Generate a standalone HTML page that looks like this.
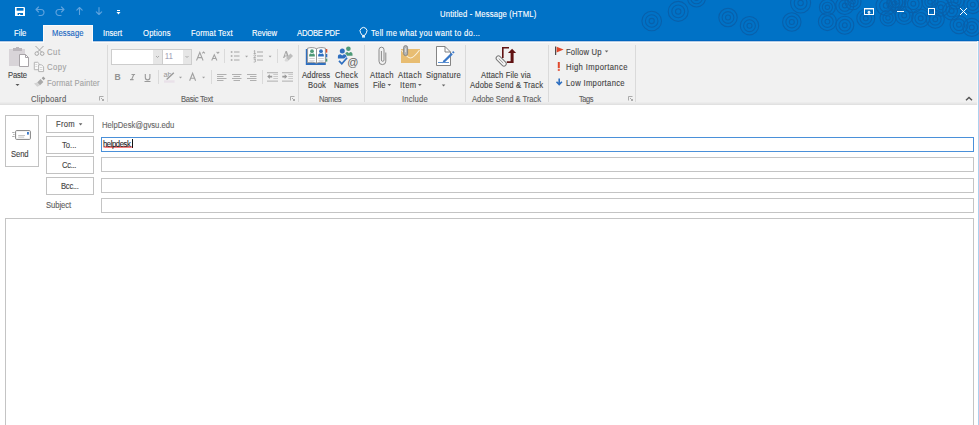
<!DOCTYPE html>
<html><head><meta charset="utf-8">
<style>
*{box-sizing:border-box}
html,body{margin:0;padding:0;width:979px;height:425px;overflow:hidden;background:#fff;font-family:"Liberation Sans",sans-serif}
.a{position:absolute}
.t{position:absolute;white-space:pre;font-size:8.5px;line-height:10px;letter-spacing:-0.2px;color:#444;-webkit-text-stroke:0.12px currentColor}
.sep{position:absolute;width:1px;background:#dadada}
.btn{position:absolute;border:1px solid #c2c2c2;background:#fff}
.inp{position:absolute;border:1px solid #c4c4c4;background:#fff;left:101px;width:873px}
svg{position:absolute;left:0;top:0}
</style></head><body>
<div class="a" style="left:0;top:0;width:979px;height:41px;background:#0072c6"></div>
<div class="a" style="left:0;top:40px;width:979px;height:1px;background:#0066bf"></div>
<div class="a" style="left:0;top:41px;width:978px;height:1px;background:#b4cce6"></div>
<div class="a" style="left:0;top:42px;width:978px;height:1px;background:#fbfbfb"></div>
<div class="a" style="left:0;top:43px;width:978px;height:59px;background:#f1f1f1"></div>
<div class="a" style="left:0;top:102px;width:978px;height:1px;background:#ececec"></div>
<div class="a" style="left:0;top:103px;width:978px;height:1px;background:#e7e7e7"></div>
<div class="a" style="left:0;top:104px;width:978px;height:1px;background:#e1e1e1"></div>
<div class="a" style="left:977px;top:41px;width:1px;height:64px;background:#fafafa"></div>
<div class="a" style="left:978px;top:41px;width:1px;height:384px;background:#add0ef"></div>
<svg width="979" height="41" style="z-index:0"><g fill="none" stroke="#0860ab" stroke-width="1.1"><g transform="translate(651.7 21.0)"><circle r="9.8"/><circle r="6.3"/><circle r="2.6"/></g><g transform="translate(678.2 11.4)"><circle r="10.0"/><circle r="6.4"/><circle r="2.7"/></g><g transform="translate(696.5 -2.0)"><circle r="9.0"/><circle r="5.8"/><circle r="2.4"/></g><g transform="translate(728.0 17.5)"><circle r="9.2"/><circle r="5.9"/><circle r="2.5"/></g><g transform="translate(749.5 25.7)"><circle r="9.2"/><circle r="5.9"/><circle r="2.5"/></g><g transform="translate(791.8 22.0)"><circle r="9.2"/><circle r="5.9"/><circle r="2.5"/></g><g transform="translate(800.6 3.0)"><circle r="10.0"/><circle r="6.4"/><circle r="2.7"/></g><g transform="translate(827.4 21.6)"><circle r="9.0"/><circle r="5.8"/><circle r="2.4"/></g><g transform="translate(827.4 7.3)"><circle r="8.0"/><circle r="5.1"/><circle r="2.2"/></g><g transform="translate(844.8 25.2)"><circle r="9.0"/><circle r="5.8"/><circle r="2.4"/></g><g transform="translate(844.8 5.5)"><circle r="9.0"/><circle r="5.8"/><circle r="2.4"/></g><g transform="translate(853.0 1.8)"><circle r="8.0"/><circle r="5.1"/><circle r="2.2"/></g><g transform="translate(865.8 18.3)"><circle r="9.0"/><circle r="5.8"/><circle r="2.4"/></g><g transform="translate(886.0 5.5)"><circle r="10.0"/><circle r="6.4"/><circle r="2.7"/></g><g transform="translate(896.9 1.8)"><circle r="9.0"/><circle r="5.8"/><circle r="2.4"/></g><g transform="translate(904.2 15.5)"><circle r="9.0"/><circle r="5.8"/><circle r="2.4"/></g><g transform="translate(913.3 3.7)"><circle r="9.0"/><circle r="5.8"/><circle r="2.4"/></g><g transform="translate(920.7 18.3)"><circle r="9.0"/><circle r="5.8"/><circle r="2.4"/></g><g transform="translate(935.3 19.2)"><circle r="9.0"/><circle r="5.8"/><circle r="2.4"/></g><g transform="translate(940.8 7.3)"><circle r="9.0"/><circle r="5.8"/><circle r="2.4"/></g><g transform="translate(951.7 11.0)"><circle r="9.0"/><circle r="5.8"/><circle r="2.4"/></g><g transform="translate(959.0 24.7)"><circle r="9.0"/><circle r="5.8"/><circle r="2.4"/></g><g transform="translate(971.8 27.4)"><circle r="9.0"/><circle r="5.8"/><circle r="2.4"/></g><g transform="translate(972.8 4.6)"><circle r="9.0"/><circle r="5.8"/><circle r="2.4"/></g><g transform="translate(894.7 2.9)"><circle r="8.0"/><circle r="5.1"/><circle r="2.2"/></g><g transform="translate(955.9 1.0)"><circle r="8.0"/><circle r="5.1"/><circle r="2.2"/></g><g transform="translate(930.0 2.0)"><circle r="8.0"/><circle r="5.1"/><circle r="2.2"/></g><g transform="translate(888.0 18.0)"><circle r="8.0"/><circle r="5.1"/><circle r="2.2"/></g></g></svg>
<div class="a" style="left:43px;top:25px;width:50px;height:18px;background:#fbfbfb"></div>
<div class="a" style="left:44px;top:26px;width:48px;height:17px;background:#f1f1f1"></div>
<div class="sep" style="left:107px;top:45px;height:57px"></div>
<div class="sep" style="left:298px;top:45px;height:57px"></div>
<div class="sep" style="left:364px;top:45px;height:57px"></div>
<div class="sep" style="left:465px;top:45px;height:57px"></div>
<div class="sep" style="left:548px;top:45px;height:57px"></div>
<div class="sep" style="left:635px;top:45px;height:57px"></div>
<div class="sep" style="left:158px;top:70px;height:14px"></div>
<div class="sep" style="left:211px;top:70px;height:14px"></div>
<div class="sep" style="left:262px;top:70px;height:14px"></div>
<div class="sep" style="left:224px;top:49px;height:14px"></div>
<div class="sep" style="left:277px;top:49px;height:14px"></div>
<div class="btn" style="left:5px;top:115px;width:34px;height:52px"></div>
<div class="btn" style="left:46px;top:115px;width:48px;height:18px"></div>
<div class="btn" style="left:46px;top:136px;width:48px;height:18px"></div>
<div class="btn" style="left:46px;top:156px;width:48px;height:18px"></div>
<div class="btn" style="left:46px;top:177px;width:48px;height:18px"></div>
<div class="inp" style="top:137px;height:15px;border-color:#4a90d9"></div>
<div class="inp" style="top:157px;height:15px"></div>
<div class="inp" style="top:178px;height:15px"></div>
<div class="inp" style="top:198px;height:15px"></div>
<div class="a" style="left:5px;top:218px;width:969px;height:220px;border:1px solid #c4c4c4"></div>
<svg width="979" height="425">
<!-- quick access -->
<path fill="#fff" d="M15 7h9.3l0.7 0.7v8.3h-10z"/>
<rect fill="#0072c6" x="16.6" y="8" width="6.9" height="2.7"/>
<rect fill="#0072c6" x="17.6" y="13" width="5.4" height="2"/>
<rect fill="#fff" x="19" y="14" width="1.2" height="1"/>
<g stroke="#5fa3de" stroke-width="1.1" fill="none" stroke-linecap="round" stroke-linejoin="round">
<path d="M36 9.5l2.5-2.5M36 9.5l2.5 2.5M36 9.5h5a3 3 0 0 1 0 6h-2"/>
<path d="M64 9.5l-2.5-2.5M64 9.5l-2.5 2.5M64 9.5h-5a3 3 0 0 0 0 6h2"/>
<path d="M79.5 7.5v7M76.8 10.2l2.7-2.7 2.7 2.7"/>
<path d="M99 7.5v7M96.3 11.8l2.7 2.7 2.7-2.7"/>
</g>
<rect fill="#fff" x="117" y="10" width="3" height="1"/>
<path fill="#fff" d="M116.5 12h4l-2 2.5z"/>
<!-- title right icons -->
<g stroke="#fff" stroke-width="1" fill="none">
<rect x="864.5" y="8.5" width="9" height="6"/>
<path d="M865 9.5h8" opacity="0.45"/>
<path d="M897 11.5h7"/>
<rect x="928.5" y="8.5" width="6" height="6"/>
<path d="M960 8l7 7M967 8l-7 7"/>
</g>
<path fill="#fff" d="M869 10.5l-2 2h1.3v1.5h1.4v-1.5h1.3z"/>
<!-- lightbulb -->
<g stroke="#fff" stroke-width="1" fill="none">
<path d="M362.3 35.4L360.6 32.8A3.45 3.45 0 1 1 366.4 32.8L364.7 35.4z"/>
</g>
<rect fill="#fff" opacity="0.85" x="362" y="35.6" width="3" height="2"/>

<!-- paste -->
<rect fill="#d8d4d8" x="9" y="49" width="16" height="17"/>
<rect fill="#bbb6bb" x="13" y="48" width="9" height="3"/>
<rect fill="#bbb6bb" x="16" y="47" width="3" height="2"/>
<path fill="#fff" stroke="#a8a4a8" stroke-width="1" d="M19.5 54.5h6l3 3v9h-9z"/>
<path fill="none" stroke="#a8a4a8" stroke-width="1" d="M25.5 54.5v3h3"/>
<path fill="#555" d="M15.5 84h4l-2 2z"/>
<!-- cut -->
<g stroke="#a6a6a6" stroke-width="1" fill="none">
<path d="M35.5 46l6 6M43.5 46l-6 6"/>
<circle cx="36.8" cy="53.6" r="1.8"/><circle cx="42.2" cy="53.6" r="1.8"/>
</g>
<!-- copy -->
<g stroke="#b4b4b4" stroke-width="1" fill="#f9f9f9">
<path d="M34.3 62.3h3.4l1.6 1.6v5.8h-5z"/>
<path d="M38.6 64.8h3l2 2v4.8h-5z"/>
</g>
<g fill="#c8c8c8"><rect x="35.3" y="64.3" width="2" height="0.7"/><rect x="35.3" y="66" width="2" height="0.7"/><rect x="39.8" y="67.3" width="2.6" height="0.7"/><rect x="39.8" y="69" width="2.6" height="0.7"/></g>
<!-- format painter -->
<path fill="#9e9e9e" d="M43.3 76.6l2 2-1.6 1.6-2-2z"/>
<path fill="#a9a9a9" d="M40.6 79.1l2.8 2.8-3.4 3.4-2.8-2.8z"/>
<path fill="#d2d2d2" d="M37 82.6l2.8 2.8-2.6 1.4-3.2-3.2z"/>

<!-- combos -->
<rect x="111.5" y="49.5" width="80" height="15" fill="#fff" stroke="#cdcdcd"/>
<rect x="153" y="50" width="9" height="14" fill="#e6e6e6"/>
<rect x="183" y="50" width="8" height="14" fill="#e6e6e6"/>
<path d="M162.5 49.5v15" stroke="#cdcdcd"/>
<g stroke="#999" stroke-width="0.8" fill="none"><path d="M156 56l1.5 1.5 1.5-1.5M185.5 56l1.5 1.5 1.5-1.5"/></g>
<!-- grow/shrink font -->
<g stroke="#a2a2a2" stroke-width="1.05" fill="none">
<path d="M196.5 60.5l3.3-8 3.3 8M197.8 57.6h4"/>
<path d="M202.3 53.3l1.3-1.4 1.3 1.4"/>
<path d="M211.7 60.5l2.6-5.8 2.6 5.8M212.6 58.4h3.4"/>
<path d="M216.6 51.9l1.3 1.3 1.3-1.3"/>
</g>
<!-- bullets -->
<g fill="#a8a8a8">
<rect x="230.8" y="51.2" width="1.6" height="1.6"/><rect x="230.8" y="55.2" width="1.6" height="1.6"/><rect x="230.8" y="59.2" width="1.6" height="1.6"/>
<rect x="234" y="51.5" width="5.5" height="1"/><rect x="234" y="55.5" width="5.5" height="1"/><rect x="234" y="59.5" width="5.5" height="1"/>
<rect x="257" y="51.5" width="6" height="1"/><rect x="257" y="55.5" width="6" height="1"/><rect x="257" y="59.5" width="6" height="1"/>
</g>
<g fill="none" stroke="#9c9c9c" stroke-width="0.8"><path d="M253.8 51.1l0.9-0.5v3M253.6 53.6h2.2M253.7 55.6c0.4-0.9 1.9-0.9 1.9 0s-1.2 1.2-1.9 2h2.1M253.7 59h1.9l-1 1.1c1.5 0.1 1.5 1.9 0 1.9h-0.9"/></g>
<g fill="#a4a4a4"><path d="M245.1 55.8h3l-1.5 1.7z"/><path d="M268.6 55.8h3l-1.5 1.7z"/></g>
<!-- clear formatting -->
<path fill="#a8a8a8" d="M283 58l2.6-7h1.2l2.2 6-1 1-.6-1.6h-2.4l-.7 1.6zm2-2.6h1.8l-.9-2.6z"/>
<path fill="#bdbdbd" d="M290.5 53.5l2.5 2.5-4.5 4.5-2.5-2.5z"/>
<path fill="#d8d8d8" d="M286 58l2.5 2.5-1 1h-2l-1-1z"/>
<!-- BIU -->
<g fill="#939393" font-family="Liberation Sans" font-size="8.6" font-weight="bold"><text x="114.6" y="80.2">B</text></g>
<g stroke="#9a9a9a" stroke-width="1.1" fill="none">
<path d="M131.5 74.5h3.6M130 79.6h3.6M133.8 74.5l-2.2 5.1"/>
<path d="M145.3 74v3.6a2.3 2.3 0 0 0 4.6 0v-3.6"/>
</g>
<rect fill="#9a9a9a" x="144.5" y="81" width="6" height="1"/>
<!-- highlighter -->
<g fill="#969696" font-family="Liberation Sans" font-size="7.4"><text x="163.6" y="76.8" letter-spacing="-0.3">ab</text></g>
<path stroke="#f1f1f1" stroke-width="2.4" d="M166.8 79.6l7-6.6"/>
<path stroke="#9a9a9a" stroke-width="1.4" d="M166.6 79.6l7.2-6.8"/>
<rect fill="#e9e1e9" x="164" y="80.3" width="10.6" height="2.4"/>
<g fill="#a0a0a0"><path d="M179 76.7h3l-1.5 1.8z"/><path d="M202.1 76.7h3l-1.5 1.8z"/></g>
<path stroke="#a2a2a2" stroke-width="1.15" fill="none" d="M189.6 80.8l3-7.4 3 7.4M190.8 78.2h3.8"/>
<!-- align -->
<g fill="#b0b0b0">
<rect x="217" y="74" width="9.5" height="1"/><rect x="217" y="76" width="6.5" height="1"/><rect x="217" y="78" width="9.5" height="1"/><rect x="217" y="80" width="6.5" height="1"/>
<rect x="232" y="74" width="9.5" height="1"/><rect x="233.5" y="76" width="6.5" height="1"/><rect x="232" y="78" width="9.5" height="1"/><rect x="233.5" y="80" width="6.5" height="1"/>
<rect x="247" y="74" width="9.5" height="1"/><rect x="250" y="76" width="6.5" height="1"/><rect x="247" y="78" width="9.5" height="1"/><rect x="250" y="80" width="6.5" height="1"/>
</g>
<!-- indent -->
<g fill="#bdbdbd">
<rect x="267" y="72" width="11" height="1.3"/><rect x="267" y="80.5" width="11" height="1.3"/>
<rect x="282" y="72" width="11" height="1.3"/><rect x="282" y="80.5" width="11" height="1.3"/>
</g>
<g fill="#cacaca">
<rect x="273.3" y="74" width="4.7" height="1"/><rect x="273.3" y="76" width="4.7" height="1"/><rect x="273.3" y="78" width="4.7" height="1"/>
<rect x="288.3" y="74" width="4.7" height="1"/><rect x="288.3" y="76" width="4.7" height="1"/><rect x="288.3" y="78" width="4.7" height="1"/>
</g>
<g fill="#9a9a9a">
<path d="M267.2 76.6l2.6-2.4v1.6h2.4v1.7h-2.4v1.6z"/>
<path d="M287.3 76.6l-2.6-2.4v1.6h-2.4v1.7h2.4v1.6z"/>
</g>
<!-- launchers -->
<g stroke="#999" stroke-width="0.8" fill="none">
<path d="M99.5 100.5v-4h4M101 98l2.5 2.5M103.5 99v1.5h-1.5"/>
<path d="M290.5 100.5v-4h4M292 98l2.5 2.5M294.5 99v1.5h-1.5"/>
<path d="M628.5 100.5v-4h4M630 98l2.5 2.5M632.5 99v1.5h-1.5"/>
</g>

<!-- address book -->
<path fill="#2f6fbf" d="M305.8 49h1.7v13.5h18.3v2.4h-20z"/>
<path fill="#fff" stroke="#8c8c8c" stroke-width="0.9" d="M307.6 48.2c3-0.9 6.3-0.9 8.9 0.5 2.6-1.4 5.9-1.4 8.9-0.5v14.6c-3-0.9-6.3-0.9-8.9 0.5-2.6-1.4-5.9-1.4-8.9-0.5z"/>
<path stroke="#8c8c8c" stroke-width="0.9" d="M316.5 48.7v14.6"/>
<circle cx="312.0" cy="51.20" r="1.90" fill="#4e9a78"/><path fill="#4e9a78" d="M309.15 56.52v-1.37c0-1.06 0.85-1.67 1.99-1.67l0.85 0.8 0.85-0.8c1.14 0 1.99 0.61 1.99 1.67v1.37z"/>
<circle cx="321.0" cy="51.20" r="1.90" fill="#2f6fbf"/><path fill="#2f6fbf" d="M318.15 56.52v-1.37c0-1.06 0.85-1.67 1.99-1.67l0.85 0.8 0.85-0.8c1.14 0 1.99 0.61 1.99 1.67v1.37z"/>
<g fill="#c4c4c4"><rect x="309.3" y="58.2" width="5.4" height="0.8"/><rect x="309.3" y="60.4" width="5.4" height="0.8"/><rect x="318.3" y="58.2" width="5.4" height="0.8"/><rect x="318.3" y="60.4" width="5.4" height="0.8"/></g>
<rect fill="#e0502e" x="325.8" y="49" width="1.5" height="3.6"/>
<rect fill="#2f6fbf" x="325.8" y="53.9" width="1.5" height="3.4"/>
<rect fill="#4e9a78" x="325.8" y="58.6" width="1.5" height="3"/>

<!-- check names -->
<circle cx="348.4" cy="48.8" r="2.3" fill="#4e9a78"/><path fill="#4e9a78" d="M345.3 55.8v-1.6c0-1.3 1-2.1 2.2-2.1l1.4 1.2 1.4-1.2c1.2 0 2.2 0.8 2.2 2.1v1.6z"/>
<g fill="#f1f1f1" stroke="#f1f1f1" stroke-width="1.2"><circle cx="342.3" cy="51.1" r="2.5"/><path d="M337.9 58.6v-2c0-1.5 1.1-2.3 2.6-2.3l1.7 1.3 1.7-1.3c1.5 0 2.6 0.8 2.6 2.3v2z"/></g>
<circle cx="342.3" cy="51.1" r="2.5" fill="#2f6fbf"/><path fill="#2f6fbf" d="M337.9 58.6v-2c0-1.5 1.1-2.3 2.6-2.3l1.7 1.3 1.7-1.3c1.5 0 2.6 0.8 2.6 2.3v2z"/>
<path fill="none" stroke="#f1f1f1" stroke-width="3" d="M339 60.8l2.8 3 5.3-6"/>
<path fill="none" stroke="#2f6fbf" stroke-width="1.7" d="M339 60.8l2.8 3 5.3-6"/>
<circle cx="353.3" cy="61.9" r="6" fill="#f1f1f1"/>
<text x="347.3" y="65.6" font-family="Liberation Sans" font-size="11" fill="#606060">@</text>

<!-- attach file paperclip -->
<path fill="none" stroke="#8a8a8a" stroke-width="1" d="M385.8 52.5V61.2A3.4 3.4 0 0 1 379 61.2V49.7A2.5 2.5 0 0 1 384 49.7V60A1.3 1.3 0 0 1 381.4 60V51"/>
<!-- attach item -->
<rect fill="#e8bd72" x="401" y="49" width="19" height="14"/>
<path fill="none" stroke="#fbf0dc" stroke-width="1.1" d="M401.5 50c3 4 6 8 9 8s6-4 9-8"/>
<path fill="#b4b4b4" stroke="#7a7a7a" stroke-width="0.8" d="M403.6 47.6a2 2 0 0 1 4 0v6a2 2 0 0 1-4 0z"/>
<path fill="none" stroke="#f2f2f2" stroke-width="0.7" d="M405.6 48.2v4"/>
<!-- signature -->
<path fill="#fff" stroke="#777" stroke-width="0.9" d="M436.5 46.5h8.5l5.5 5.5v13.5h-14z"/>
<path fill="none" stroke="#777" stroke-width="0.9" d="M445 46.5v5.5h5.5"/>
<path stroke="#3a78c8" stroke-width="2.2" d="M443.8 61.8l8.2-8.2"/>
<path stroke="#3a78c8" stroke-width="2" d="M452.7 52.9l1.2-1.2"/>
<path fill="#3a78c8" d="M442.3 63.2l1-2.6 1.6 1.6z"/>
<rect fill="#5a8fd0" x="438" y="62" width="11" height="1"/>
<!-- adobe send -->
<g fill="#601212">
<path d="M502 47h7v1.6h-5.4v9.4h-1.6z"/>
<path d="M510.6 52.7v8.6h-3.8v1.7h6.8v-10.3z"/>
<path d="M508 52.9l4.1-4.2 4 4.2z"/>
</g>
<g transform="rotate(45 501.2 61)"><rect x="495" y="58.7" width="12.4" height="4.6" rx="2.3" fill="#f6f6f6" stroke="#7a7a7a" stroke-width="1"/><path d="M497.6 61h6.6" stroke="#8a8a8a" stroke-width="0.8"/></g>
<!-- tags -->
<rect fill="#4a4a4a" x="555" y="46.5" width="1.2" height="8.5"/>
<path fill="#e0472b" d="M556.6 46.8l7 2.8-7 2.8z"/>
<rect fill="#e0472b" x="557.8" y="62" width="2" height="6.2"/>
<rect fill="#e0472b" x="557.8" y="69.2" width="2" height="1.6"/>
<path fill="none" stroke="#2e6fc0" stroke-width="1.6" d="M559.2 78.5v6M556.5 81.8l2.7 2.8 2.7-2.8"/>
<!-- dropdown arrows -->
<g fill="#666">
<path d="M78.8 123.3h3.6l-1.8 2.2z"/>
<path d="M387.5 84h3.7l-1.85 1.9z"/>
<path d="M418 84h3.7l-1.85 1.9z"/>
<path d="M441.8 84.5h3.5l-1.75 1.9z"/>
<path d="M604.8 50.5h3.5l-1.75 1.9z"/>
</g>
<!-- collapse caret -->
<path fill="none" stroke="#555" stroke-width="1.4" d="M966 100.3l3-2.9 3 2.9"/>
<!-- send icon -->
<rect x="15.6" y="130.6" width="14.8" height="8.8" rx="1" fill="#fff" stroke="#7c7c7c" stroke-width="0.95"/>
<rect fill="#3a78c8" x="27" y="132" width="1.9" height="2.6"/>
<g fill="#b4b4b4"><rect x="18.2" y="135.1" width="6.8" height="0.8"/><rect x="18.2" y="136.7" width="6" height="0.8"/></g>
<g fill="#999"><rect x="12.2" y="132.1" width="2.4" height="0.8"/><rect x="13.2" y="134.1" width="1.4" height="0.8"/><rect x="12.2" y="136.1" width="2.4" height="0.8"/></g>
<!-- caret & squiggle -->
<rect fill="#111" x="132" y="139" width="1" height="9"/>
<path fill="none" stroke="#f02020" stroke-width="1" d="M104 147.7l1 -1.3 1 1.3 1 -1.3 1 1.3 1 -1.3 1 1.3 1 -1.3 1 1.3 1 -1.3 1 1.3 1 -1.3 1 1.3 1 -1.3 1 1.3 1 -1.3 1 1.3 1 -1.3 1 1.3 1 -1.3 1 1.3 1 -1.3 1 1.3 1 -1.3 1 1.3 1 -1.3 1 1.3 1 -1.3 1 1.3"/>
</svg>
<div class="t" style="left:440px;top:9px;color:#fff;letter-spacing:0.202px;transform:scaleX(0.9000);transform-origin:0 0;">Untitled - Message (HTML)</div>
<div class="t" style="left:14px;top:28px;color:#fff;letter-spacing:0.014px;transform:scaleX(0.9000);transform-origin:0 0;">File</div>
<div class="t" style="left:52px;top:28px;color:#1666c2;letter-spacing:0.080px;transform:scaleX(0.9000);transform-origin:0 0;">Message</div>
<div class="t" style="left:103px;top:28px;color:#fff;letter-spacing:0.008px;transform:scaleX(0.9000);transform-origin:0 0;">Insert</div>
<div class="t" style="left:143px;top:28px;color:#fff;letter-spacing:0.224px;transform:scaleX(0.9000);transform-origin:0 0;">Options</div>
<div class="t" style="left:191px;top:28px;color:#fff;letter-spacing:0.144px;transform:scaleX(0.9000);transform-origin:0 0;">Format Text</div>
<div class="t" style="left:252px;top:28px;color:#fff;letter-spacing:0.008px;transform:scaleX(0.9000);transform-origin:0 0;">Review</div>
<div class="t" style="left:297px;top:28px;color:#fff;letter-spacing:-0.227px;transform:scaleX(0.9000);transform-origin:0 0;">ADOBE PDF</div>
<div class="t" style="left:371px;top:28px;color:#fff;letter-spacing:0.312px;transform:scaleX(0.9000);transform-origin:0 0;">Tell me what you want to do...</div>
<div class="t" style="left:8px;top:70px;color:#444;letter-spacing:-0.170px;transform:scaleX(0.9000);transform-origin:0 0;">Paste</div>
<div class="t" style="left:46.6px;top:47px;color:#a3a3a3;letter-spacing:0.600px;transform:scaleX(0.9046);transform-origin:0 0;">Cut</div>
<div class="t" style="left:46.6px;top:62px;color:#a3a3a3;letter-spacing:0.571px;transform:scaleX(0.9000);transform-origin:0 0;">Copy</div>
<div class="t" style="left:46.6px;top:78px;color:#a3a3a3;letter-spacing:0.177px;transform:scaleX(0.9000);transform-origin:0 0;">Format Painter</div>
<div class="t" style="left:31px;top:94px;color:#606060;letter-spacing:0.340px;transform:scaleX(0.9000);transform-origin:0 0;">Clipboard</div>
<div class="t" style="left:181px;top:94px;color:#606060;letter-spacing:-0.308px;transform:scaleX(0.9000);transform-origin:0 0;">Basic Text</div>
<div class="t" style="left:302px;top:70px;color:#444;letter-spacing:0.025px;transform:scaleX(0.9000);transform-origin:0 0;">Address</div>
<div class="t" style="left:308px;top:80px;color:#444;letter-spacing:0.175px;transform:scaleX(0.9000);transform-origin:0 0;">Book</div>
<div class="t" style="left:335px;top:70px;color:#444;letter-spacing:0.310px;transform:scaleX(0.9000);transform-origin:0 0;">Check</div>
<div class="t" style="left:334px;top:80px;color:#444;letter-spacing:0.077px;transform:scaleX(0.9000);transform-origin:0 0;">Names</div>
<div class="t" style="left:319px;top:94px;color:#606060;letter-spacing:-0.431px;transform:scaleX(0.9000);transform-origin:0 0;">Names</div>
<div class="t" style="left:370px;top:70px;color:#444;letter-spacing:0.423px;transform:scaleX(0.9000);transform-origin:0 0;">Attach</div>
<div class="t" style="left:373px;top:80px;color:#444;letter-spacing:0.057px;transform:scaleX(0.9000);transform-origin:0 0;">File</div>
<div class="t" style="left:398px;top:70px;color:#444;letter-spacing:0.446px;transform:scaleX(0.9000);transform-origin:0 0;">Attach</div>
<div class="t" style="left:400px;top:80px;color:#444;letter-spacing:0.486px;transform:scaleX(0.9000);transform-origin:0 0;">Item</div>
<div class="t" style="left:426px;top:70px;color:#444;letter-spacing:0.280px;transform:scaleX(0.9000);transform-origin:0 0;">Signature</div>
<div class="t" style="left:402px;top:94px;color:#606060;letter-spacing:0.188px;transform:scaleX(0.9000);transform-origin:0 0;">Include</div>
<div class="t" style="left:481px;top:70px;color:#444;letter-spacing:0.132px;transform:scaleX(0.9000);transform-origin:0 0;">Attach File via</div>
<div class="t" style="left:470px;top:80px;color:#444;letter-spacing:0.183px;transform:scaleX(0.9000);transform-origin:0 0;">Adobe Send &amp; Track</div>
<div class="t" style="left:472px;top:94px;color:#606060;letter-spacing:-0.072px;transform:scaleX(0.9000);transform-origin:0 0;">Adobe Send &amp; Track</div>
<div class="t" style="left:566px;top:47px;color:#444;letter-spacing:0.209px;transform:scaleX(0.9000);transform-origin:0 0;">Follow Up</div>
<div class="t" style="left:566px;top:62px;color:#444;letter-spacing:0.424px;transform:scaleX(0.9000);transform-origin:0 0;">High Importance</div>
<div class="t" style="left:566px;top:78px;color:#444;letter-spacing:0.357px;transform:scaleX(0.9000);transform-origin:0 0;">Low Importance</div>
<div class="t" style="left:579px;top:94px;color:#606060;letter-spacing:-0.500px;transform:scaleX(0.8758);transform-origin:0 0;">Tags</div>
<div class="t" style="left:11px;top:149px;color:#444;letter-spacing:-0.125px;transform:scaleX(0.9000);transform-origin:0 0;">Send</div>
<div class="t" style="left:56px;top:119px;color:#444;letter-spacing:0.271px;transform:scaleX(0.9000);transform-origin:0 0;">From</div>
<div class="t" style="left:62px;top:140px;color:#444;letter-spacing:-0.015px;transform:scaleX(0.9000);transform-origin:0 0;">To...</div>
<div class="t" style="left:62px;top:160px;color:#444;letter-spacing:-0.380px;transform:scaleX(0.9000);transform-origin:0 0;">Cc...</div>
<div class="t" style="left:61px;top:181px;color:#444;letter-spacing:-0.286px;transform:scaleX(0.9000);transform-origin:0 0;">Bcc...</div>
<div class="t" style="left:46px;top:200px;color:#606060;letter-spacing:-0.076px;transform:scaleX(0.9000);transform-origin:0 0;">Subject</div>
<div class="t" style="left:102px;top:120px;color:#666;letter-spacing:0.025px;transform:scaleX(0.9000);transform-origin:0 0;">HelpDesk@gvsu.edu</div>
<div class="t" style="left:103px;top:139px;color:#1e1e1e;letter-spacing:-0.450px;transform:scaleX(0.9000);transform-origin:0 0;">helpdesk</div>
<div class="t" style="left:164.5px;top:51px;color:#a4a4b8;letter-spacing:0.4px;transform:scaleX(0.85);transform-origin:0 0">11</div>
</body></html>
